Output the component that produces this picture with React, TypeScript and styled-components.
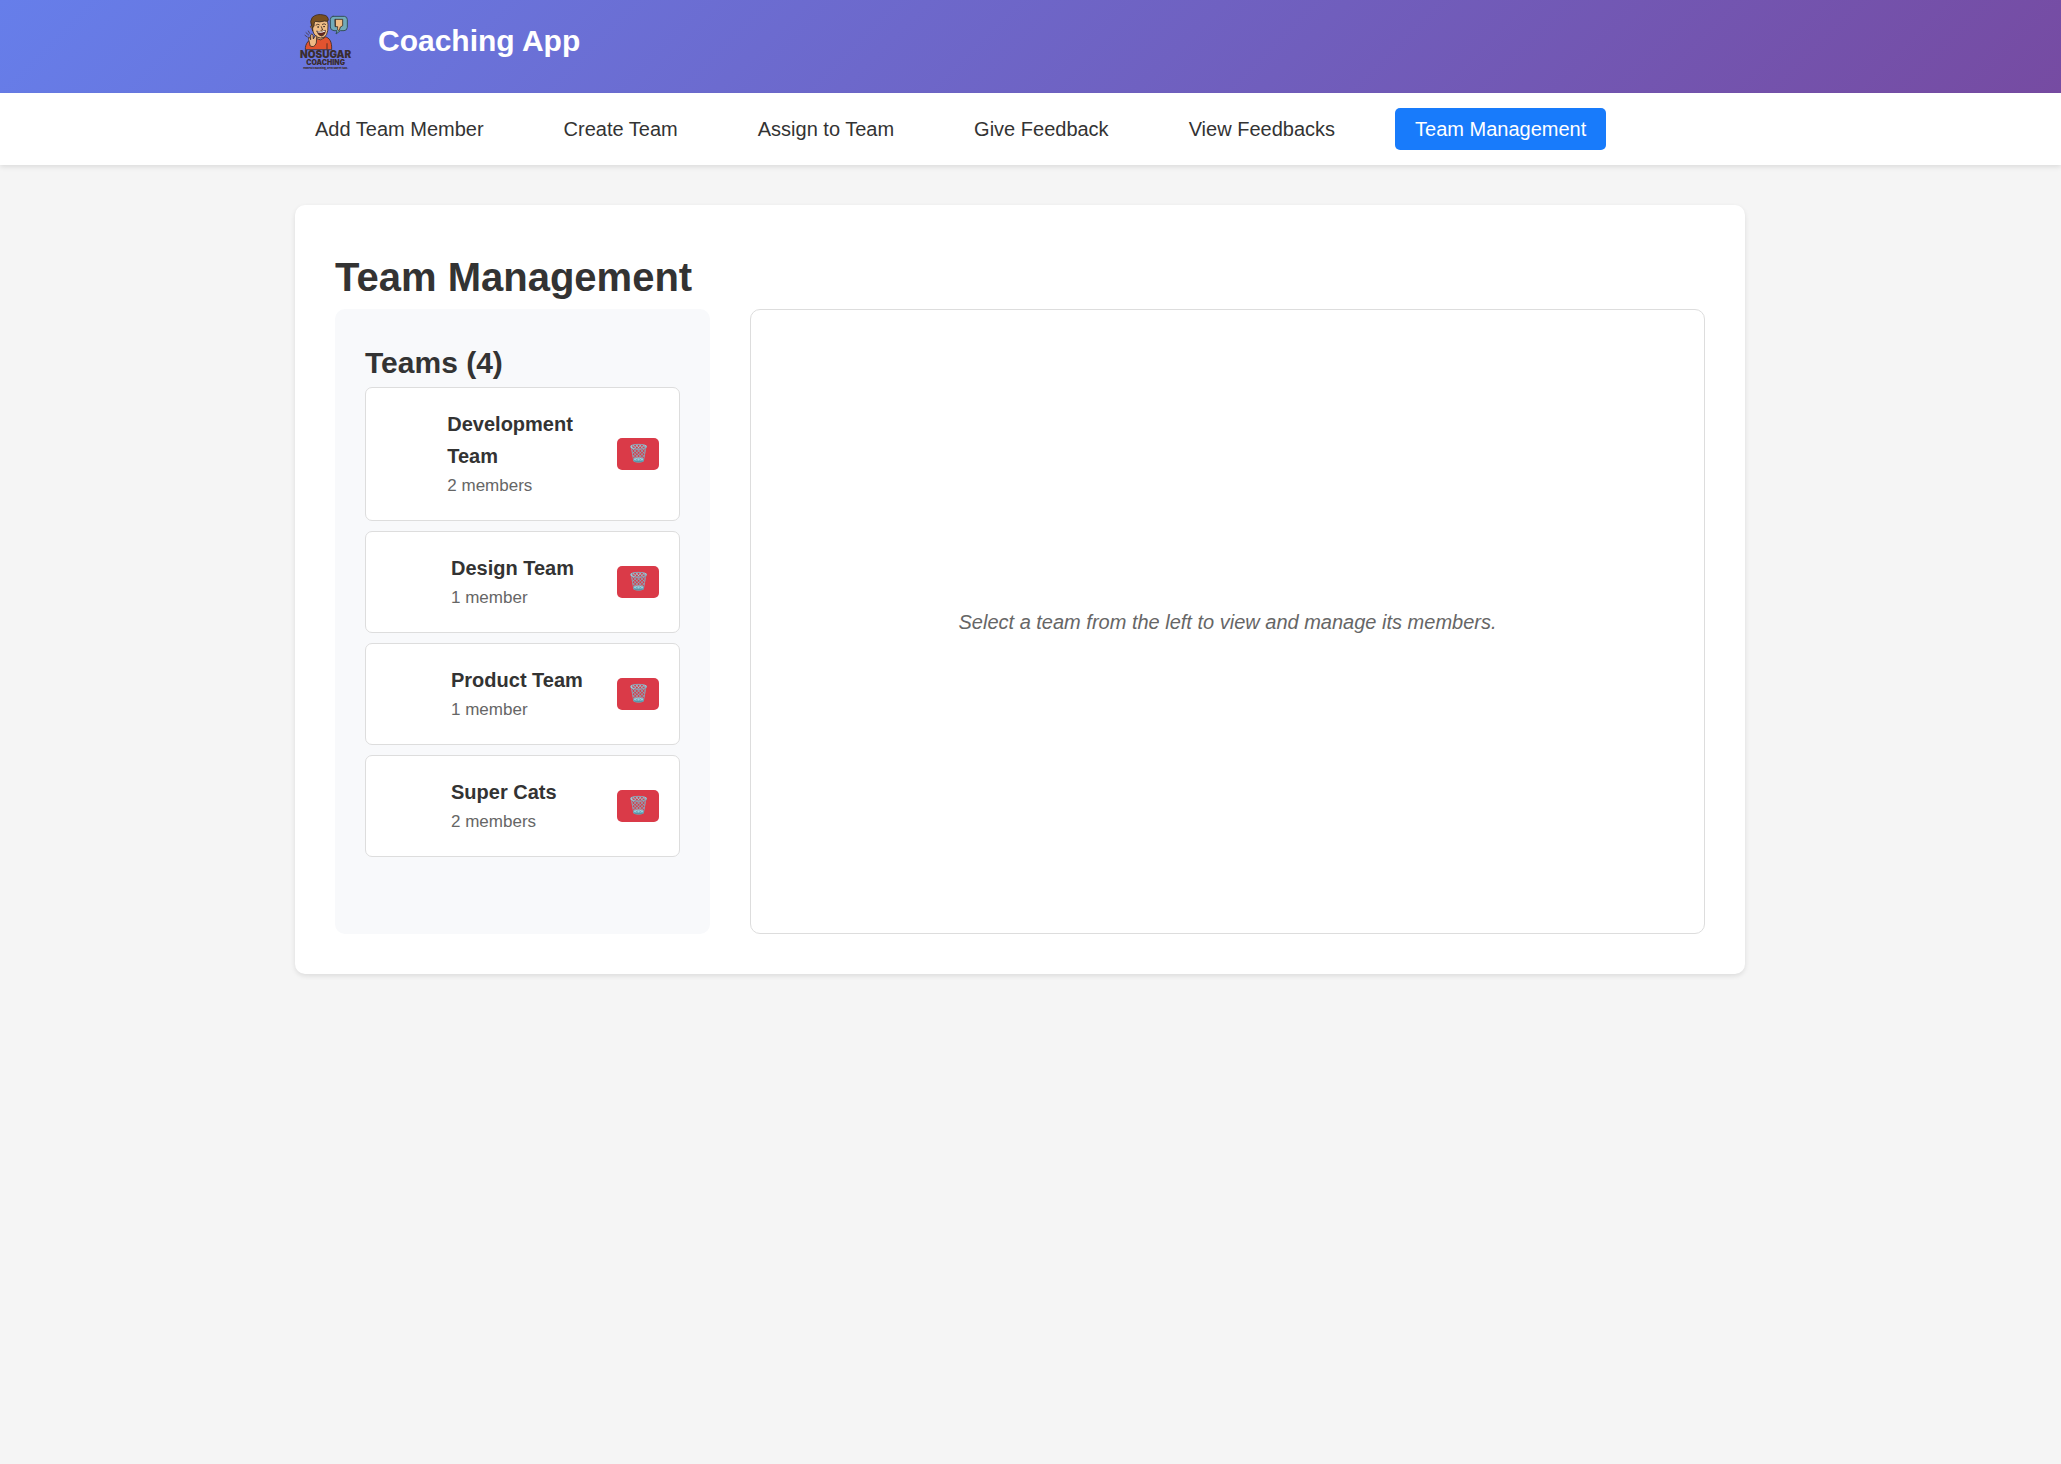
import React from "react";
import styled, { createGlobalStyle } from "styled-components";

const GlobalStyle = createGlobalStyle`
  * { box-sizing: border-box; }
  body {
    margin: 0;
    background: #f5f5f5;
    color: #333;
    font: 20px/32px "Liberation Sans", Arial, sans-serif;
  }
  h1, h2, h3, p, ul { margin: 0; padding: 0; }
  ul { list-style: none; }
`;

const Container = styled.div`
  max-width: 1450px;
  margin: 0 auto;
`;

const Header = styled.header`
  background: linear-gradient(135deg, #667eea 0%, #764ba2 100%);
  color: #fff;
  padding: 11px 21px 22px 0;
`;

const Brand = styled(Container)`
  display: flex;
  align-items: center;
  gap: 20px;
`;

const BrandName = styled.div`
  font-size: 30px;
  line-height: 48px;
  font-weight: bold;
`;

const Nav = styled.nav`
  background: #fff;
  padding: 15px 21px 15px 0;
  box-shadow: 0 2px 5px rgba(0, 0, 0, 0.1);
`;

const NavList = styled(Container).attrs({ as: "ul" })`
  display: flex;
  gap: 40px;
`;

const NavLink = styled.a<{ $active?: boolean }>`
  display: block;
  padding: 10px 20px;
  border-radius: 5px;
  line-height: 22px;
  text-decoration: none;
  color: ${(p) => (p.$active ? "#fff" : "#333")};
  background: ${(p) => (p.$active ? "#187bfb" : "transparent")};
`;

const Main = styled.main`
  padding: 40px 21px 40px 0;
`;

const Card = styled(Container)`
  background: #fff;
  border-radius: 10px;
  padding: 40px;
  box-shadow: 0 2px 5px rgba(0, 0, 0, 0.1);
`;

const PageTitle = styled.h1`
  font-size: 40px;
  line-height: 64px;
`;

const Columns = styled.div`
  display: grid;
  grid-template-columns: 375px 1fr;
  gap: 40px;
  min-height: 625px;
`;

const Sidebar = styled.section`
  background: #f8f9fb;
  border-radius: 10px;
  padding: 30px;
`;

const SidebarTitle = styled.h2`
  font-size: 30px;
  line-height: 48px;
`;

const TeamList = styled.ul`
  display: grid;
  gap: 10px;
`;

const TeamItem = styled.li`
  display: flex;
  align-items: center;
  gap: 15px;
  padding: 20px;
  background: #fff;
  border: 1px solid #ddd;
  border-radius: 7px;
`;

const Avatar = styled.span`
  width: 50px;
`;

const TeamInfo = styled.div`
  flex-shrink: 2;
`;

const TeamName = styled.h3`
  font-size: 20px;
  line-height: 32px;
`;

const TeamCount = styled.p`
  font-size: 17px;
  line-height: 28px;
  color: #666;
`;

const DeleteButton = styled.button`
  flex: none;
  display: grid;
  place-items: center;
  width: 42px;
  height: 32px;
  margin-left: auto;
  padding: 0;
  border: 0;
  border-radius: 5px;
  background: #da3a48;
  color: #fff;
  font: 17px/20px "Liberation Sans", Arial, sans-serif;
  cursor: pointer;
`;

const Detail = styled.section`
  display: grid;
  place-items: center;
  border: 1px solid #ddd;
  border-radius: 10px;
  color: #666;
  font-style: italic;
`;

const Logo = () => (
  <svg width="63" height="60" viewBox="15 18 189 180" role="img" aria-label="NoSugar Coaching">
    <g stroke="#3b2a22" strokeWidth="2.5" strokeLinejoin="round" strokeLinecap="round">
      <path d="M46 133 C45 116 56 102 76 98 L104 95 C119 98 126 110 125 133 Z" fill="#e2532f" />
      <path d="M111 116 V132" fill="none" />
      <path d="M78 88 L80 101 Q91 109 103 99 L102 86 Z" fill="#e0a873" />
      <path d="M66 57 Q64 34 89 35 Q114 37 114 58 Q116 100 92 99 Q72 97 68 76 Z" fill="#f0bd85" />
      <path d="M65 70 Q58 64 63 62 L68 65 V77 Z" fill="#e9b078" />
      <path d="M65 63 Q58 48 67 37 Q80 25 101 30 Q115 32 115 46 Q112 51 104 48 Q88 53 75 49 Q72 52 72 64 L68 68 Z" fill="#79501f" />
      <path d="M78 60 Q84 55 88 59 M97 58 Q103 54 107 58 M94 65 L98 75 L93 76" fill="none" />
      <circle cx="84" cy="66" r="1" fill="#30231d" />
      <circle cx="102" cy="65" r="1" fill="#30231d" />
      <path d="M81 79 Q94 85 106 76 Q105 92 94 93 Q84 91 81 79 Z" fill="#65251e" />
      <path d="M84 81 Q96 84 104 79" stroke="#fff" strokeWidth="3" fill="none" />
      <path d="M59 116 L56 103 Q54 94 59 97 L62 104 L62 90 Q66 83 69 91 L70 102 L75 93 Q81 89 80 98 L79 114 Q73 130 61 123 Z" fill="#efba85" />
      <path d="M48 83 L56 90 M45 91 L52 96 M55 78 L59 85" fill="none" strokeWidth="2" />
      <path d="M129 34 H163 Q172 35 172 44 V67 Q171 77 162 77 H151 L138 87 L141 77 H132 Q121 76 121 66 V43 Q121 35 129 34 Z" fill="#71aaba" stroke="#34505a" strokeWidth="3" />
      <path d="M136 43 H158 V62 L151 66 L148 76 Q141 78 143 65 H137 Z" fill="#efbc84" />
      <path d="M136 44 V64" fill="none" />
    </g>
    <g fill="#3a2c2e" textAnchor="middle" fontFamily="Inter, sans-serif" fontWeight="900">
      <text x="107" y="160" fontSize="30">NOSUGAR</text>
      <text x="107" y="180" fontSize="21">COACHING</text>
      <text x="107" y="191" fontSize="8">Honest coaching, zero sweet talk.</text>
    </g>
  </svg>
);

const navItems = [
  "Add Team Member",
  "Create Team",
  "Assign to Team",
  "Give Feedback",
  "View Feedbacks",
  "Team Management",
];

const teams = [
  { name: "Development Team", members: 2 },
  { name: "Design Team", members: 1 },
  { name: "Product Team", members: 1 },
  { name: "Super Cats", members: 2 },
];

export default function App() {
  const current = "Team Management";
  return (
    <>
      <GlobalStyle />
      <Header>
        <Brand>
          <Logo />
          <BrandName>Coaching App</BrandName>
        </Brand>
      </Header>
      <Nav aria-label="Main">
        <NavList>
          {navItems.map((item) => (
            <li key={item}>
              <NavLink
                href={"#" + item.toLowerCase().replace(/ /g, "-")}
                $active={item === current}
                aria-current={item === current ? "page" : undefined}
              >
                {item}
              </NavLink>
            </li>
          ))}
        </NavList>
      </Nav>
      <Main>
        <Card>
          <PageTitle>Team Management</PageTitle>
          <Columns>
            <Sidebar>
              <SidebarTitle>Teams ({teams.length})</SidebarTitle>
              <TeamList>
                {teams.map((team) => (
                  <TeamItem key={team.name}>
                    <Avatar />
                    <TeamInfo>
                      <TeamName>{team.name}</TeamName>
                      <TeamCount>
                        {team.members} {team.members === 1 ? "member" : "members"}
                      </TeamCount>
                    </TeamInfo>
                    <DeleteButton type="button" aria-label={"Delete " + team.name}>
                      🗑️
                    </DeleteButton>
                  </TeamItem>
                ))}
              </TeamList>
            </Sidebar>
            <Detail>
              <p>Select a team from the left to view and manage its members.</p>
            </Detail>
          </Columns>
        </Card>
      </Main>
    </>
  );
}
